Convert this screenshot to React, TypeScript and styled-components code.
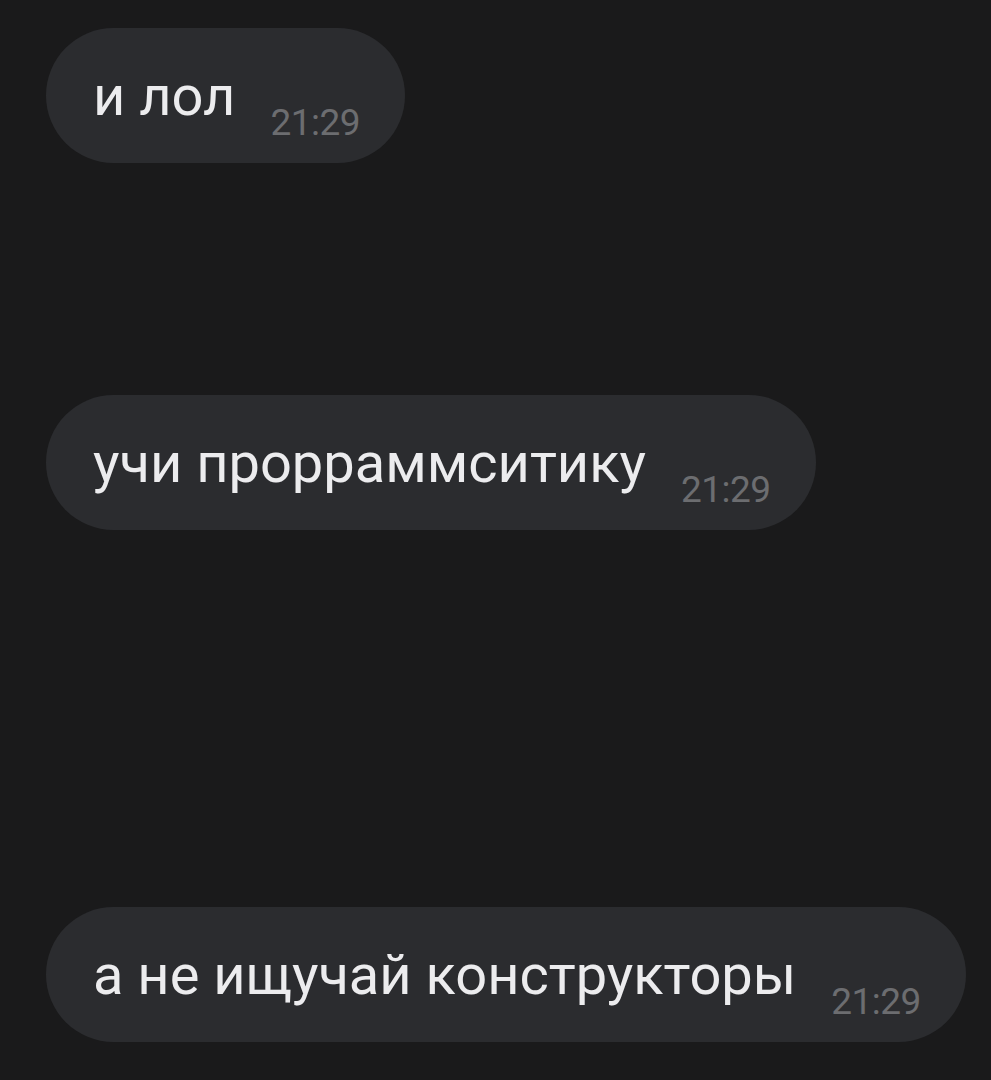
import styled, { createGlobalStyle } from 'styled-components';

const GlobalStyle = createGlobalStyle`
  html, body {
    margin: 0;
    padding: 0;
    background: #1a1a1b;
  }
  body {
    font-family: Roboto, "Noto Sans", sans-serif;
  }
`;

const Chat = styled.div`
  width: 991px;
  height: 1080px;
  box-sizing: border-box;
  padding: 28px 0 0 46px;
  background: #1a1a1b;
  display: flex;
  flex-direction: column;
  align-items: flex-start;
  overflow: hidden;
`;

const Bubble = styled.div<{ $offset: number }>`
  margin-top: ${p => p.$offset}px;
  height: 135px;
  box-sizing: border-box;
  padding: 40px 45px 0 47px;
  border-radius: 68px;
  background: #2b2c2f;
  display: flex;
  align-items: flex-start;
  gap: 35px;
`;

const Text = styled.span`
  color: #ececee;
  font-size: 56px;
  line-height: 56px;
  white-space: nowrap;
`;

const Time = styled.span`
  margin-top: 36px;
  color: #6c6d70;
  font-size: 37px;
  line-height: 37px;
  letter-spacing: -0.5px;
  white-space: nowrap;
`;

const messages = [
  { text: 'и лол', time: '21:29', offset: 0 },
  { text: 'учи прорраммситику', time: '21:29', offset: 232 },
  { text: 'а не ищучай конструкторы', time: '21:29', offset: 377 },
];

export default function App() {
  return (
    <>
      <GlobalStyle />
      <Chat>
        {messages.map((m, i) => (
          <Bubble key={i} $offset={m.offset}>
            <Text>{m.text}</Text>
            <Time>{m.time}</Time>
          </Bubble>
        ))}
      </Chat>
    </>
  );
}
